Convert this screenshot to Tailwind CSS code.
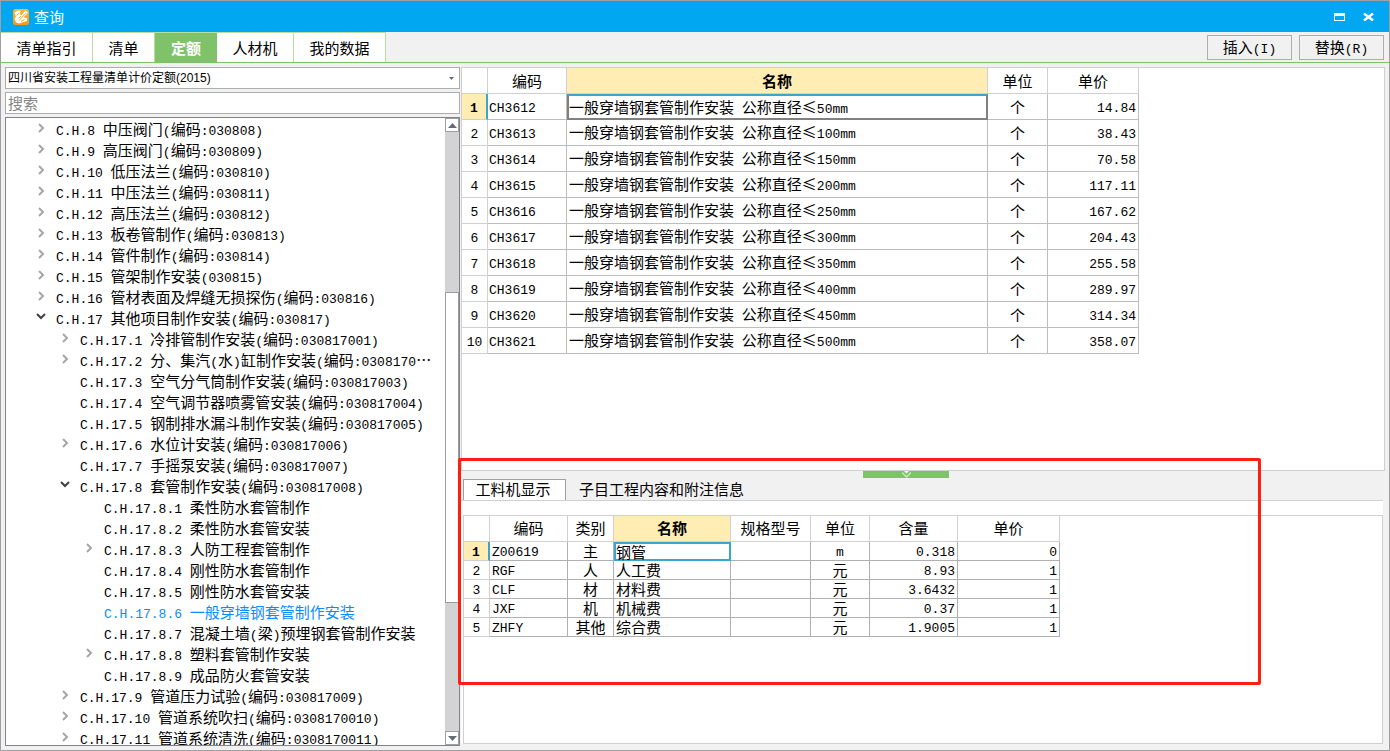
<!DOCTYPE html>
<html lang="zh-CN">
<head>
<meta charset="utf-8">
<meta name="viewport" content="width=device-width, initial-scale=1">
<title>查询</title>
<script src="https://cdn.jsdelivr.net/npm/@tailwindcss/browser@4"></script>
</head>
<body class="flex h-screen flex-col overflow-hidden border border-[#a0a0a0] bg-[#f1f1f1] font-['Noto_Sans_CJK_SC',sans-serif] text-[15px] leading-5 text-black">

<header class="flex h-[31px] shrink-0 items-center bg-[#01a8f1] pr-[15px] pl-3 text-white">
  <svg class="mr-[5px] size-4" viewBox="0 0 16 16" aria-hidden="true">
    <defs><linearGradient id="logo" x1="0" y1="0" x2="0" y2="1"><stop offset="0" stop-color="#fbb536"/><stop offset="1" stop-color="#f79a10"/></linearGradient></defs>
    <rect width="16" height="16" rx="2.5" fill="url(#logo)"/>
    <path d="M1.500 3.500 5 1.500 8 2 6.500 4 8 6.500 12.500 1.500 15 3.500 10.500 8.500 14 9 14 12 6 14.500 3 13.500 1.500 9.500 3 8Z" fill="#fff"/>
    <path d="M3.500 6.500 6 4M5.500 9.500 8 7M6 11.500 12.500 4.500M8 12.500 11.500 10.500" stroke="#f9a826" stroke-width="1" fill="none"/>
  </svg>
  <h1>查询</h1>
  <div class="ml-auto flex items-center gap-[18px]">
    <button aria-label="最大化"><svg class="block h-2 w-[11px]" viewBox="0 0 11 8"><path d="M0 0H11V8H0ZM1 3V7H10V3Z" fill="#fff" fill-rule="evenodd"/></svg></button>
    <button aria-label="关闭"><svg class="block h-2 w-[11px]" viewBox="0 0 11 8"><path d="M1 0.500 10 7.500M10 0.500 1 7.500" stroke="#fff" stroke-width="2.400"/></svg></button>
  </div>
</header>

<div class="flex h-[31px] shrink-0 items-stretch border-b border-[#80c269]">
  <nav class="flex border-t border-[#b5dfa0]">
    <button class="w-[92px] border-r border-[#b5dfa0] bg-white">清单指引</button>
    <button class="w-[62px] border-r border-[#b5dfa0] bg-white">清单</button>
    <button class="w-[62px] bg-[#80c269] font-bold text-white">定额</button>
    <button class="w-[77px] border-r border-[#b5dfa0] bg-white">人材机</button>
    <button class="w-[92px] border-r border-[#b5dfa0] bg-white">我的数据</button>
  </nav>
  <div class="ml-auto flex items-center gap-[7px] pr-[5px]">
    <button class="mixed h-[25px] w-[85px] border border-[#adadad] leading-none">插入(I)</button>
    <button class="mixed h-[25px] w-[85px] border border-[#adadad] leading-none">替换(R)</button>
  </div>
</div>

<main class="flex min-h-0 flex-1 pt-1 pr-1 pl-1">
  <aside class="flex w-[455px] shrink-0 flex-col gap-[3px] pb-1">
    <div class="relative shrink-0">
      <select aria-label="定额库" class="block h-[22px] w-full appearance-none border border-[#adadad] bg-white pl-0.5 font-['Liberation_Sans','Noto_Sans_CJK_SC',sans-serif] text-xs"><option>四川省安装工程量清单计价定额(2015)</option></select>
      <svg class="pointer-events-none absolute top-2.5 right-1.5 h-[3px] w-[5px]" viewBox="0 0 5 3" aria-hidden="true"><path d="M0 0H5L2.500 3Z" fill="#666b78"/></svg>
    </div>
    <input aria-label="搜索" placeholder="搜索" class="block h-[22px] w-full shrink-0 border border-[#adadad] bg-white px-0.5 pb-0.5 outline-none placeholder:text-[#858585]">
    <div class="flex min-h-0 flex-1 border border-[#82828c] bg-white">
      <ul id="tree" role="tree" class="min-w-0 flex-1 overflow-hidden pt-0.5"></ul>
      <div class="flex w-3.5 shrink-0 flex-col bg-[#d3d3d3]" aria-hidden="true">
        <div class="grid h-3.5 shrink-0 place-items-center border border-[#a0a0a0] bg-white"><svg class="h-[5px] w-[9px]" viewBox="0 0 9 5"><path d="M0 5H9L4.500 0Z" fill="#666b78"/></svg></div>
        <div class="flex-[160]"></div>
        <div class="flex-[310] border border-[#9c9ca0] bg-white"></div>
        <div class="flex-[128]"></div>
        <div class="grid h-3.5 shrink-0 place-items-center border border-[#a0a0a0] bg-white"><svg class="h-[5px] w-[9px]" viewBox="0 0 9 5"><path d="M0 0H9L4.500 5Z" fill="#666b78"/></svg></div>
      </div>
    </div>
  </aside>

  <div class="ml-px flex min-w-0 flex-1 flex-col pb-1.5">
    <section class="min-h-0 flex-[403] overflow-hidden border border-[#d0d0d0] bg-white">
      <table class="w-[677px] table-fixed border-separate border-spacing-0" aria-label="定额子目">
        <colgroup><col class="w-[26px]"><col class="w-[79px]"><col class="w-[421px]"><col class="w-[60px]"><col class="w-[91px]"></colgroup>
        <thead><tr id="itemHead"></tr></thead>
        <tbody id="items"></tbody>
      </table>
    </section>

    <section class="relative flex min-h-0 flex-[274] flex-col">
      <div class="flex h-[29px] shrink-0 items-end pl-0.5">
        <button class="h-[21px] w-[103px] border border-b-0 border-[#a0a0a0] bg-white pr-[3px] pb-0.5 leading-none">工料机显示</button>
        <button class="h-[21px] px-[13px] pb-px leading-none">子目工程内容和附注信息</button>
      </div>
      <button aria-label="收起" class="absolute top-0 left-[402px] grid h-[7px] w-[86px] place-items-center bg-[#80c269]">
        <svg class="h-[7px] w-[9px]" viewBox="0 0 9 7"><path d="M2 0H7L4.500 2.500Z" fill="#fff"/><path d="M0 1.500 4.500 6 9 1.500" stroke="#cfeac2" stroke-width="1.300" fill="none"/></svg>
      </button>
      <div class="mr-0.5 flex min-h-0 flex-1 flex-col border-t border-[#d0d0d0] bg-white pt-3.5 pl-0.5">
        <div class="min-h-0 flex-1 overflow-hidden border border-[#d0d0d0]">
          <table class="w-[596px] table-fixed border-separate border-spacing-0" aria-label="工料机">
            <colgroup><col class="w-[26px]"><col class="w-[78px]"><col class="w-[46px]"><col class="w-[117px]"><col class="w-[80px]"><col class="w-[59px]"><col class="w-[88px]"><col class="w-[102px]"></colgroup>
            <thead><tr id="partHead"></tr></thead>
            <tbody id="parts"></tbody>
          </table>
        </div>
      </div>
      <div class="pointer-events-none absolute -top-[13px] right-[124px] bottom-[59px] -left-[3px] rounded-xs border-3 border-[#ff1e12]"></div>
    </section>
  </div>
</main>

<script>
// Latin runs use a fixed-pitch face; Chinese keeps the page font.
const mixed = s => s.replace(/[\x20-\x7e]+/g, r => `<span class="whitespace-pre font-['Liberation_Mono',monospace] text-[13px] leading-none">${r}</span>`);
document.querySelectorAll('.mixed').forEach(e => e.innerHTML = mixed(e.textContent));

// [level, state (c = closed, o = open, blank = leaf), label]
const nodes = [
  [0,'c','C.H.8 中压阀门(编码:030808)'],
  [0,'c','C.H.9 高压阀门(编码:030809)'],
  [0,'c','C.H.10 低压法兰(编码:030810)'],
  [0,'c','C.H.11 中压法兰(编码:030811)'],
  [0,'c','C.H.12 高压法兰(编码:030812)'],
  [0,'c','C.H.13 板卷管制作(编码:030813)'],
  [0,'c','C.H.14 管件制作(编码:030814)'],
  [0,'c','C.H.15 管架制作安装(030815)'],
  [0,'c','C.H.16 管材表面及焊缝无损探伤(编码:030816)'],
  [0,'o','C.H.17 其他项目制作安装(编码:030817)'],
  [1,'c','C.H.17.1 冷排管制作安装(编码:030817001)'],
  [1,'c','C.H.17.2 分、集汽(水)缸制作安装(编码:0308170⋯'],
  [1,'','C.H.17.3 空气分气筒制作安装(编码:030817003)'],
  [1,'','C.H.17.4 空气调节器喷雾管安装(编码:030817004)'],
  [1,'','C.H.17.5 钢制排水漏斗制作安装(编码:030817005)'],
  [1,'c','C.H.17.6 水位计安装(编码:030817006)'],
  [1,'','C.H.17.7 手摇泵安装(编码:030817007)'],
  [1,'o','C.H.17.8 套管制作安装(编码:030817008)'],
  [2,'','C.H.17.8.1 柔性防水套管制作'],
  [2,'','C.H.17.8.2 柔性防水套管安装'],
  [2,'c','C.H.17.8.3 人防工程套管制作'],
  [2,'','C.H.17.8.4 刚性防水套管制作'],
  [2,'','C.H.17.8.5 刚性防水套管安装'],
  [2,'','C.H.17.8.6 一般穿墙钢套管制作安装'],
  [2,'','C.H.17.8.7 混凝土墙(梁)预埋钢套管制作安装'],
  [2,'c','C.H.17.8.8 塑料套管制作安装'],
  [2,'','C.H.17.8.9 成品防火套管安装'],
  [1,'c','C.H.17.9 管道压力试验(编码:030817009)'],
  [1,'c','C.H.17.10 管道系统吹扫(编码:0308170010)'],
  [1,'c','C.H.17.11 管道系统清洗(编码:0308170011)'],
];
const indent = ['pl-[30px]', 'pl-[54px]', 'pl-[78px]'];
const arrows = {
  c: '<svg class="h-2.5 w-2.5" viewBox="0 0 10 10"><path d="M3 1 7 5 3 9" fill="none" stroke="#a6a6a6" stroke-width="2"/></svg>',
  o: '<svg class="h-2.5 w-2.5" viewBox="0 0 10 10"><path d="M1 2 5 6 9 2" fill="none" stroke="#404040" stroke-width="2"/></svg>',
  '': '',
};
document.getElementById('tree').innerHTML = nodes.map(([lv, st, t]) => {
  const on = t.startsWith('C.H.17.8.6');
  return `<li role="treeitem" aria-selected="${on}" class="flex h-[21px] ${indent[lv]} ${on ? 'text-[#0a8cff]' : ''}"><span class="w-5 shrink-0 pt-[3px]">${arrows[st]}</span><span class="whitespace-nowrap leading-[18px]">${mixed(t)}</span></li>`;
}).join('');

const headCell = (t, i, active) => `<th scope="col" class="h-[26px] border-r border-b border-[#d0d0d0] p-0 leading-4 ${i === active ? 'bg-[#ffedb4] font-bold' : 'font-normal'}">${mixed(t)}</th>`;
const numberCell = (n, first, h) => `<th scope="row" class="${h} border-b p-0 leading-4 ${first ? 'border-r-2 border-r-[#3aa6d0] border-b-[#d0d0d0] bg-[#ffedb4] font-bold' : 'border-r border-[#d0d0d0] font-normal'}">${mixed(String(n))}</th>`;

document.getElementById('itemHead').innerHTML = ['', '编码', '名称', '单位', '单价'].map((t, i) => headCell(t, i, 2)).join('');
const prices = ['14.84','38.43','70.58','117.11','167.62','204.43','255.58','289.97','314.34','358.07'];
document.getElementById('items').innerHTML = prices.map((p, i) => {
  const cell = 'border-r border-b border-[#bdbdbd] p-0 leading-4';
  const name = i ? `${cell} pl-0.5` : 'border-2 border-[#808080] border-t-[#3aa6d0] p-0 leading-4';
  return `<tr>${numberCell(i + 1, !i, 'h-[26px]')}<td class="${cell} pl-px">${mixed('CH' + (3612 + i))}</td><td class="${name} whitespace-nowrap">${mixed(`一般穿墙钢套管制作安装 公称直径≤${(i + 1) * 50}mm`)}</td><td class="${cell} text-center">个</td><td class="${cell} pr-0.5 text-right">${mixed(p)}</td></tr>`;
}).join('');

document.getElementById('partHead').innerHTML = ['', '编码', '类别', '名称', '规格型号', '单位', '含量', '单价'].map((t, i) => headCell(t, i, 3)).join('');
const parts = [
  ['Z00619','主','钢管','','m','0.318','0'],
  ['RGF','人','人工费','','元','8.93','1'],
  ['CLF','材','材料费','','元','3.6432','1'],
  ['JXF','机','机械费','','元','0.37','1'],
  ['ZHFY','其他','综合费','','元','1.9005','1'],
];
const align = ['pl-0.5', 'text-center', 'pl-0.5', '', 'text-center', 'pr-0.5 text-right', 'pr-0.5 text-right'];
document.getElementById('parts').innerHTML = parts.map((row, r) =>
  `<tr>${numberCell(r + 1, !r, 'h-[19px]')}${row.map((t, c) => `<td class="h-[19px] p-0 leading-[15px] ${!r && c === 2 ? 'border-2 border-[#3aa6d0]' : 'border-r border-b border-[#b0b0b0] ' + align[c]}">${mixed(t)}</td>`).join('')}</tr>`).join('');
</script>
</body>
</html>
